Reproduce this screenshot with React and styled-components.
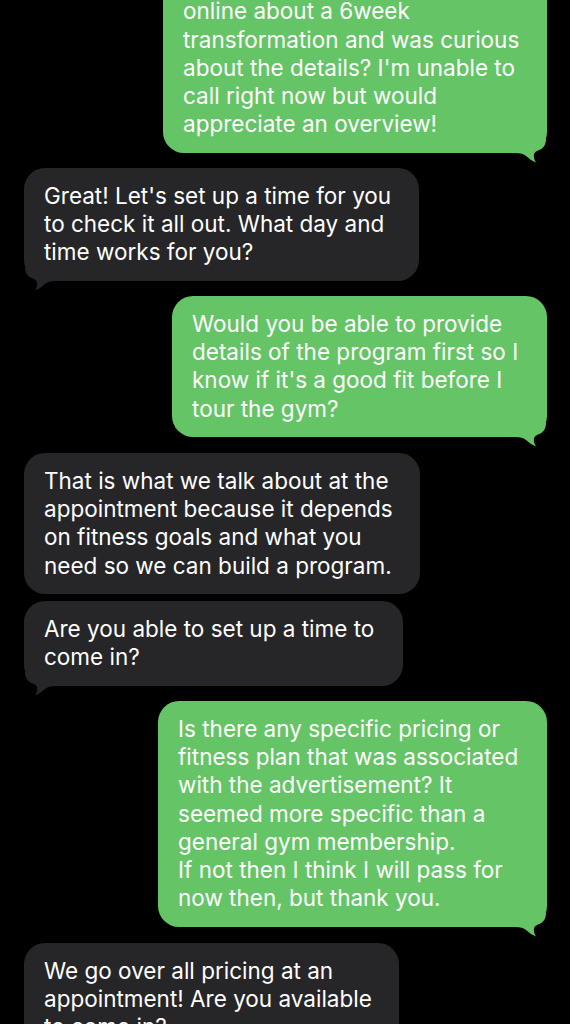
import React from 'react'
import styled, { createGlobalStyle } from 'styled-components'

const GlobalStyle = createGlobalStyle`
  html, body {
    margin: 0;
    padding: 0;
    background: #000;
  }
  body {
    font-family: Inter, "Noto Sans", "Liberation Sans", sans-serif;
    -webkit-font-smoothing: antialiased;
  }
`

const messages = [
  {
    sent: true,
    width: 384,
    gap: 0,
    tail: true,
    lines: [
      'Hi there! I saw an ad posted',
      'online about a 6week',
      'transformation and was curious',
      "about the details? I'm unable to",
      'call right now but would',
      'appreciate an overview!',
    ],
  },
  {
    sent: false,
    width: 395,
    gap: 15,
    tail: true,
    lines: [
      "Great! Let's set up a time for you",
      'to check it all out. What day and',
      'time works for you?',
    ],
  },
  {
    sent: true,
    width: 375,
    gap: 15,
    tail: true,
    lines: [
      'Would you be able to provide',
      'details of the program first so I',
      "know if it's a good fit before I",
      'tour the gym?',
    ],
  },
  {
    sent: false,
    width: 396,
    gap: 16,
    tail: false,
    lines: [
      'That is what we talk about at the',
      'appointment because it depends',
      'on fitness goals and what you',
      'need so we can build a program.',
    ],
  },
  {
    sent: false,
    width: 379,
    gap: 7,
    tail: true,
    lines: ['Are you able to set up a time to', 'come in?'],
  },
  {
    sent: true,
    width: 389,
    gap: 15,
    tail: true,
    lines: [
      'Is there any specific pricing or',
      'fitness plan that was associated',
      'with the advertisement? It',
      'seemed more specific than a',
      'general gym membership.',
      'If not then I think I will pass for',
      'now then, but thank you.',
    ],
  },
  {
    sent: false,
    width: 375,
    gap: 16,
    tail: true,
    lines: [
      'We go over all pricing at an',
      'appointment! Are you available',
      'to come in?',
    ],
  },
]

// little hook under the last bubble of a group
const Tail = ({ sent }) => (
  <TailSvg $sent={sent} viewBox="-32 -14 32 24" aria-hidden="true">
    <path
      d="M -32 -14 L -1 -14 C -1 -8 -4 -4 -9 -2.5 Q -14.5 -0.5 -13 5 Q -12.5 7.5 -11 9.5 Q -17 7 -21 3 Q -24 0 -32 0 Z"
      fill={sent ? '#65c466' : '#262628'}
    />
  </TailSvg>
)

const App = () => {
  return (
    <>
      <GlobalStyle />
      <Screen>
        <Thread>
          {messages.map((msg, i) => (
            <Row key={i} $sent={msg.sent} $gap={msg.gap}>
              <Bubble $sent={msg.sent} $w={msg.width}>
                {msg.lines.map((line, j) => (
                  <Line key={j}>{line}</Line>
                ))}
                {msg.tail && <Tail sent={msg.sent} />}
              </Bubble>
            </Row>
          ))}
        </Thread>
      </Screen>
    </>
  )
}

export default App

const Screen = styled.div`
  height: 100vh;
  overflow: hidden;
  background: #000;
`

const Thread = styled.div`
  display: flex;
  flex-direction: column;
  padding: 0 23px 0 24px;
  margin-top: -45px;
`

const Row = styled.div`
  display: flex;
  justify-content: ${(p) => (p.$sent ? 'flex-end' : 'flex-start')};
  margin-top: ${(p) => p.$gap}px;
`

const Bubble = styled.div`
  position: relative;
  box-sizing: border-box;
  width: ${(p) => p.$w}px;
  padding: 14px 0 14px 20px;
  border-radius: 21px;
  background: ${(p) => (p.$sent ? '#65c466' : '#262628')};
  color: #fff;
  font-size: 22.5px;
  line-height: 28.3px;
  white-space: nowrap;
`

const Line = styled.span`
  display: block;
`

const TailSvg = styled.svg`
  position: absolute;
  bottom: -10px;
  width: 32px;
  height: 24px;
  ${(p) => (p.$sent ? 'right: 0;' : 'left: 0; transform: scaleX(-1);')}
`
